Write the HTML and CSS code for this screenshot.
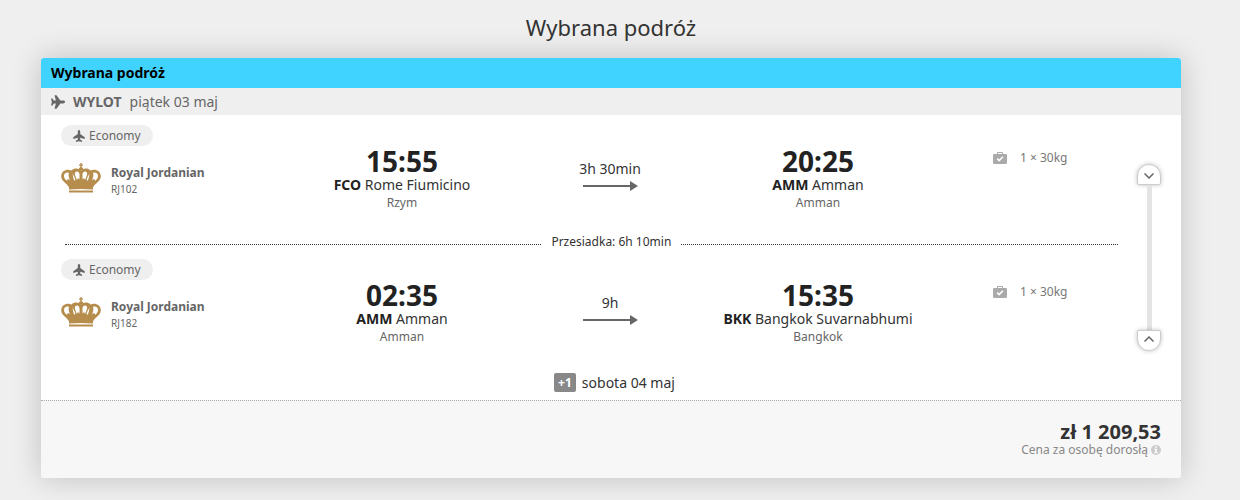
FILE: index.html
```html
<!DOCTYPE html>
<html lang="pl">
<head>
<meta charset="utf-8">
<title>Wybrana podróż</title>
<link rel="stylesheet" href="styles.css">
</head>
<body>
<svg class="sprite" aria-hidden="true">
  <symbol id="plane" viewBox="0 0 24 24"><path d="M12 0C10.300 0 9.600 1.500 9.600 3.500V8L.5 14.500v3.500l9.100-2.400V19l-3.800 2.600V24L12 22.500l6.200 1.500v-2.400L14.400 19v-3.400l9.100 2.400v-3.500L14.400 8V3.500C14.400 1.500 13.700 0 12 0z"/></symbol>
  <symbol id="crown" viewBox="0 0 40 30">
    <path d="M19.300 0h1.400v1.500H22v1.300h-1.300v1.400c1.400.4 1.900 1.800 1 3.100h-3.400c-.9-1.300-.4-2.700 1-3.100V2.800H18V1.500h1.300z"/>
    <path fill-rule="evenodd" d="M8 24.500C6.500 20.500 0 18.500.2 13 .5 7.500 6 5.500 10.500 7.500 13 4.800 17.500 5 20 7.500c2.500-2.500 7-2.700 9.500 0C34 5.500 39.500 7.500 39.800 13c.2 5.500-6.300 7.500-7.800 11.500q-12-3-24 0z
      M3 12.500c.3-2.500 3-3.600 5-2.500-1.300 2.500.5 5 .8 7.500L7 15.800l-1.200 2C4.200 16.500 2.800 15 3 12.500z
      M37 12.500c-.3-2.500-3-3.600-5-2.500 1.300 2.500-.5 5-.8 7.500l1.800-1.700 1.200 2c1.600-1.300 3-2.800 2.800-5.300z
      M11.500 10.500c.3 2.500.8 5 1.700 7.500l1.200-1.500C13.500 13.500 12.200 12 11.500 10.500z
      M28.500 10.500c-.3 2.500-.8 5-1.700 7.500l-1.200-1.500c.9-3 2.200-4.500 2.900-6z
      M14.300 9.300c1.500-1.800 4.200-.5 4.200 2v5.200l-1.500-1.500-1.200 2C15 14 13 11.500 14.300 9.300z
      M25.700 9.300c-1.500-1.800-4.200-.5-4.200 2v5.200l1.500-1.500 1.200 2c.8-3 2.800-5.500 1.500-7.700z"/>
    <path d="M8 23q12-2 24 0v3.500q-12-1-24 0zM8 27.500h24v2H8z"/>
  </symbol>
  <symbol id="bag" viewBox="0 0 14 13"><path fill-rule="evenodd" d="M4 2V1Q4 0 5 0h4q1 0 1 1v1h2.800Q14 2 14 3.200v7.600q0 1.200-1.200 1.200H1.200Q0 12 0 10.800V3.200Q0 2 1.200 2zm1 0h4V1H5z"/><path d="M4.200 6.600l2 2 3.700-3.800" fill="none" stroke="#fff" stroke-width="1.500"/></symbol>
  <symbol id="arrow" viewBox="0 0 55 10"><path d="M0 4h47V0l8 5-8 5V6H0z"/></symbol>
</svg>
<main class="page">
  <h1 class="page-title">Wybrana podróż</h1>
  <section class="card">
    <h2 class="card-title">Wybrana podróż</h2>
    <div class="direction">
      <svg class="direction-icon"><use href="#plane"/></svg>
      <strong>WYLOT</strong><span>piątek 03 maj</span>
    </div>
    <div class="journey">
      <div class="legs">
        <article class="leg">
          <span class="cabin"><svg class="cabin-icon"><use href="#plane"/></svg>Economy</span>
          <div class="leg-row">
            <div class="airline">
              <svg class="crown"><use href="#crown"/></svg>
              <div><div class="airline-name">Royal Jordanian</div><div class="flight-no">RJ102</div></div>
            </div>
            <div class="stop"><div class="time">15:55</div><div class="airport"><b>FCO</b> Rome Fiumicino</div><div class="city">Rzym</div></div>
            <div class="duration"><span>3h 30min</span><svg class="arrow"><use href="#arrow"/></svg></div>
            <div class="stop"><div class="time">20:25</div><div class="airport"><b>AMM</b> Amman</div><div class="city">Amman</div></div>
            <div class="baggage"><svg class="bag"><use href="#bag"/></svg>1 × 30kg</div>
          </div>
        </article>
        <div class="transfer">Przesiadka: 6h 10min</div>
        <article class="leg">
          <span class="cabin"><svg class="cabin-icon"><use href="#plane"/></svg>Economy</span>
          <div class="leg-row">
            <div class="airline">
              <svg class="crown"><use href="#crown"/></svg>
              <div><div class="airline-name">Royal Jordanian</div><div class="flight-no">RJ182</div></div>
            </div>
            <div class="stop"><div class="time">02:35</div><div class="airport"><b>AMM</b> Amman</div><div class="city">Amman</div></div>
            <div class="duration"><span>9h</span><svg class="arrow"><use href="#arrow"/></svg></div>
            <div class="stop"><div class="time">15:35</div><div class="airport"><b>BKK</b> Bangkok Suvarnabhumi</div><div class="city">Bangkok</div></div>
            <div class="baggage"><svg class="bag"><use href="#bag"/></svg>1 × 30kg</div>
          </div>
        </article>
      </div>
      <div class="rail">
        <button class="handle handle-top" type="button" aria-label="Rozwiń"><svg class="chevron" viewBox="0 0 10 6"><path d="M0.500 0.500L5 5l4.500-4.500"/></svg></button>
        <div class="track"></div>
        <button class="handle handle-bottom" type="button" aria-label="Zwiń"><svg class="chevron" viewBox="0 0 10 6"><path d="M0.500 5.500L5 1l4.500 4.500"/></svg></button>
      </div>
    </div>
    <div class="arrival-day"><span class="plus-day">+1</span>sobota 04 maj</div>
    <footer class="summary">
      <div class="price">zł 1 209,53</div>
      <div class="price-note">Cena za osobę dorosłą
        <svg class="info" viewBox="0 0 10 10"><circle cx="5" cy="5" r="5"/><path fill="#f7f7f7" d="M4 1.300h2v1.500H4zM3.300 3.700H6V7h.8v1.200H3.300V7H4V4.800h-.7z"/></svg>
      </div>
    </footer>
  </section>
</main>
</body>
</html>
```
FILE: styles.css
```css
* { box-sizing: border-box; }
body {
  margin: 0;
  background: #efefef;
  color: #333;
  font-family: "Noto Sans", sans-serif;
  font-size: 14px;
}
svg { display: block; fill: currentColor; flex: none; }
.sprite { position: absolute; width: 0; height: 0; }
.page { padding: 0 59px 22px 41px; }
.page-title {
  margin: 0;
  padding: 11px 0 15px;
  font-size: 22px;
  line-height: 32px;
  font-weight: 400;
  text-align: center;
}
.card {
  border-radius: 3px;
  background: #fff;
  box-shadow: 0 0 30px rgba(0, 0, 0, 0.2);
}
.card-title {
  margin: 0;
  padding: 0 10px;
  border-radius: 3px 3px 0 0;
  background: #40d3ff;
  color: #000;
  font-size: 14px;
  line-height: 30px;
}
.direction {
  display: flex;
  align-items: center;
  gap: 8px;
  padding: 0 10px;
  background: #efefef;
  color: #666;
  line-height: 27px;
}
.direction-icon { width: 14px; height: 14px; transform: rotate(90deg); }
.journey { display: flex; padding: 10px 20px 0; }
.legs { flex: 1; }
.leg { min-height: 106px; }
.cabin {
  display: inline-flex;
  align-items: center;
  gap: 4px;
  padding: 0 12px;
  border-radius: 11px;
  background: #efefef;
  color: #666;
  font-size: 12px;
  line-height: 21px;
  vertical-align: top;
}
.cabin-icon { width: 12px; height: 12px; }
.leg-row {
  display: grid;
  grid-template-columns: 191px 1fr 116px 1fr 153px;
  align-items: start;
}
.airline { display: flex; gap: 10px; padding-top: 17px; color: #666; }
.crown { width: 40px; height: 30px; color: #b68d4c; }
.airline-name { font-size: 12px; line-height: 20px; font-weight: 700; }
.flight-no { font-size: 10px; line-height: 12px; }
.stop { text-align: center; color: #222; }
.time { font-size: 28px; line-height: 30px; font-weight: 700; }
.airport { line-height: 17px; color: #333; }
.airport b { color: #222; }
.city { font-size: 12px; line-height: 19px; color: #666; }
.duration {
  display: flex;
  flex-direction: column;
  align-items: center;
  padding-top: 13px;
  line-height: 20px;
}
.arrow { width: 55px; height: 10px; margin-top: 2px; color: #666; }
.baggage {
  display: flex;
  align-items: center;
  gap: 13px;
  padding: 3px 0 0 25px;
  color: #777;
  font-size: 12px;
  line-height: 18px;
}
.bag { width: 14px; height: 13px; color: #aaa; }
.transfer {
  display: flex;
  align-items: center;
  gap: 10px;
  margin: 0 3px 6px 4px;
  font-size: 12px;
  line-height: 22px;
}
.transfer::before, .transfer::after {
  content: "";
  margin-top: 4px;
  border-top: 1px dotted #333;
}
.transfer::before { flex: 12; }
.transfer::after { flex: 11; }
.rail {
  display: flex;
  flex-direction: column;
  align-items: center;
  width: 24px;
  margin: 39px 0 14px 16px;
}
.handle {
  display: flex;
  align-items: center;
  justify-content: center;
  width: 24px;
  height: 21px;
  padding: 0;
  border: 1px solid #ccc;
  background: #fff;
  box-shadow: 0 0 4px rgba(0, 0, 0, 0.25);
  color: #666;
}
.handle-top { border-radius: 12px 12px 2px 2px; padding-top: 3px; }
.handle-bottom { border-radius: 2px 2px 12px 12px; padding-bottom: 3px; }
.chevron { width: 10px; height: 6px; fill: none; stroke: currentColor; stroke-width: 1.5; }
.track { flex: 1; width: 5px; background: #e4e4e4; }
.arrival-day {
  display: flex;
  align-items: center;
  justify-content: center;
  gap: 6px;
  padding-left: 7px;
  line-height: 35px;
}
.plus-day {
  padding: 0 4px;
  border-radius: 2px;
  background: #888;
  color: #fff;
  font-size: 12px;
  line-height: 19px;
  font-weight: 700;
}
.summary {
  padding: 20px 20px 21px;
  border-top: 1px dotted #aaa;
  border-radius: 0 0 3px 3px;
  background: #f7f7f7;
  text-align: right;
}
.price { font-size: 20px; line-height: 22px; font-weight: 700; }
.price-note {
  display: flex;
  align-items: center;
  justify-content: flex-end;
  gap: 3px;
  color: #888;
  font-size: 12px;
  line-height: 14px;
}
.info { width: 10px; height: 10px; color: #ccc; }
```
